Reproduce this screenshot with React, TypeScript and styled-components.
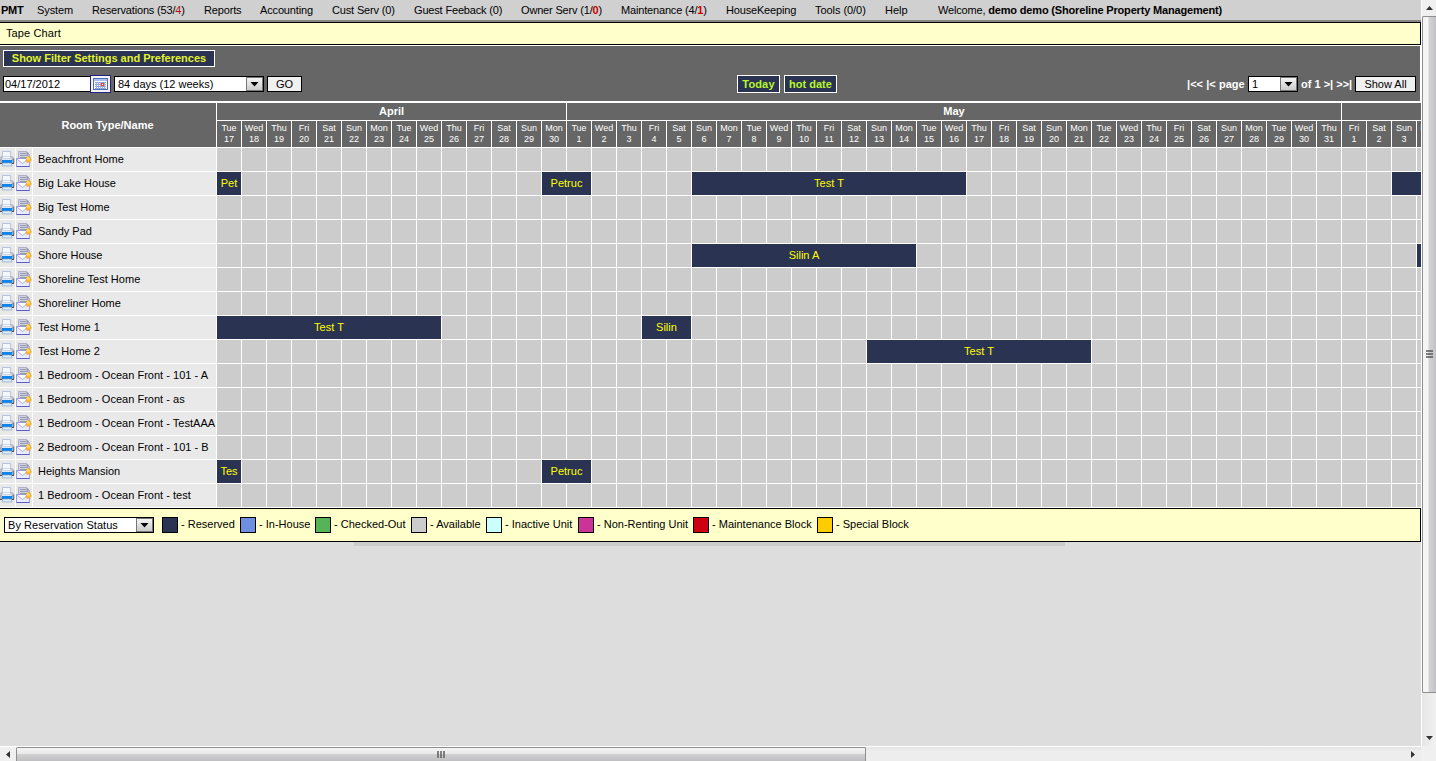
import React from "react";
import styled, { createGlobalStyle } from "styled-components";

const navy = "#2a3352";

const GlobalStyle = createGlobalStyle`
  * { box-sizing: border-box; }
  body {
    margin: 0;
    background: #ddd;
    overflow: hidden;
    font: 11px/14px "Liberation Sans", Arial, sans-serif;
    color: #000;
  }
  svg { flex: none; }
`;

const Screen = styled.div`
  display: grid;
  grid-template: 746px 15px / 1421px 15px;
  width: 1436px;
  height: 761px;
  overflow: hidden;
`;
const Page = styled.main`
  background: #ddd;
  overflow: hidden;
`;

const MenuBar = styled.nav`
  display: flex;
  height: 22px;
  padding: 3px 0 0 1px;
  background: #d0d0d0;
  border-bottom: 2px solid #888;
  white-space: nowrap;
`;
const MenuItem = styled.span<{ $w: number; $ls?: number; $bold?: boolean }>`
  width: ${(p) => p.$w}px;
  letter-spacing: ${(p) => p.$ls ?? 0}px;
  font-weight: ${(p) => (p.$bold ? "bold" : "normal")};
`;
const Alert = styled.span<{ $bold?: boolean }>`
  color: ${(p) => (p.$bold ? "#c00" : "#b01010")};
  font-weight: ${(p) => (p.$bold ? "bold" : "normal")};
`;

const TitleBar = styled.header`
  height: 23px;
  padding: 3px 5px 0 6px;
  background: #ffffcc;
  border: 1px solid #000;
  border-left: 0;
  letter-spacing: 0.1px;
`;

const Toolbar = styled.section`
  height: 58px;
  padding: 4px 4px 0 3px;
  background: #666;
  border: solid #fff;
  border-width: 1px 1px 2px 0;
`;
const Controls = styled.div`
  display: flex;
  align-items: center;
  height: 18px;
  margin-top: 8px;
`;
const NavyButton = styled.button<{ $w: number; $h: number; $color: string; $ls?: number }>`
  display: flex;
  align-items: flex-start;
  justify-content: center;
  width: ${(p) => p.$w}px;
  height: ${(p) => p.$h}px;
  padding: ${(p) => p.$h - 17}px 0 0;
  border: 1px solid #fff;
  background: ${navy};
  color: ${(p) => p.$color};
  font: bold 11px/14px "Liberation Sans", Arial, sans-serif;
  letter-spacing: ${(p) => p.$ls ?? 0}px;
  white-space: nowrap;
`;
const DateField = styled.div`
  width: 87px;
  height: 16px;
  padding-left: 1px;
  border: 1px solid #000;
  border-right: 0;
  background: #fff;
`;
const CalendarButton = styled.span`
  display: flex;
  width: 21px;
  height: 18px;
  border: 1px solid #23237d;
  background: #f4f4fc;
  margin-right: 3px;
`;
const SelectBox = styled.div<{ $w: number; $ls?: number }>`
  display: flex;
  justify-content: space-between;
  flex: none;
  width: ${(p) => p.$w}px;
  height: 16px;
  padding-left: 3px;
  border: 1px solid #000;
  background: #fff;
  color: #000;
  font-weight: normal;
  letter-spacing: ${(p) => p.$ls ?? 0}px;
`;
const Arrow = styled.span`
  display: flex;
  align-items: center;
  justify-content: center;
  width: 17px;
  height: 14px;
  border: 1px solid #777;
  background: linear-gradient(#f4f4f4, #ccc);
`;
const PlainButton = styled.button<{ $w: number; $gap?: number }>`
  flex: none;
  width: ${(p) => p.$w}px;
  height: 16px;
  margin-left: ${(p) => p.$gap ?? 4}px;
  padding: 0;
  border: 1px solid #000;
  background: #f0f0f0;
  font: 11px/14px "Liberation Sans", Arial, sans-serif;
  color: #000;
`;
const DateLinks = styled.div`
  display: flex;
  gap: 4px;
  margin-left: 435px;
`;
const Pager = styled.div`
  display: flex;
  align-items: center;
  margin-left: auto;
  color: #fff;
  font-weight: bold;
  white-space: nowrap;
`;
const PagerText = styled.span<{ $w: number; $ls?: number }>`
  width: ${(p) => p.$w}px;
  letter-spacing: ${(p) => p.$ls ?? 0}px;
`;

const Chart = styled.section`
  width: 1421px;
  overflow: hidden;
`;
const ChartHead = styled.div`
  display: grid;
  grid-template-columns: 217px 1225px;
  height: 45px;
  background: #666;
  color: #fff;
`;
const Corner = styled.div`
  display: flex;
  align-items: center;
  justify-content: center;
  padding-right: 1px;
  border: solid #fff;
  border-width: 0 1px 1px 0;
  font-weight: bold;
`;
const Months = styled.div`
  display: grid;
  grid-template-columns: 350px 775px 750px;
`;
const Month = styled.div`
  height: 18px;
  padding-top: 1px;
  border: solid #fff;
  border-width: 0 1px 1px 0;
  font-weight: bold;
  text-align: center;
`;
const Days = styled.div`
  display: flex;
`;
const Day = styled.div`
  width: 25px;
  height: 27px;
  flex: none;
  padding-top: 2px;
  border: solid #fff;
  border-width: 0 1px 1px 0;
  font-size: 9px;
  line-height: 11px;
  text-align: center;
`;
const Row = styled.div`
  display: grid;
  grid-template-columns: 16px 17px 184px repeat(49, 25px);
  height: 24px;
`;
const IconCell = styled.div`
  display: flex;
  background: #e9e9e9;
  border: solid #fff;
  border-width: 0 1px 1px 0;
  overflow: hidden;
`;
const NameCell = styled.div`
  padding: 4px 0 0 5px;
  background: #e9e9e9;
  border: solid #fff;
  border-width: 0 1px 1px 0;
  letter-spacing: 0.02px;
  white-space: nowrap;
`;
const Slot = styled.div<{ $span?: number; $booked?: boolean }>`
  grid-column: span ${(p) => p.$span ?? 1};
  padding: 4px 0 0;
  border: solid #fff;
  border-width: 0 1px 1px 0;
  background: ${(p) => (p.$booked ? navy : "#ccc")};
  color: #ff0;
  text-align: center;
  overflow: hidden;
`;

const Legend = styled.footer`
  display: flex;
  align-items: center;
  height: 34px;
  padding: 0 0 0 4px;
  background: #ffffcc;
  border: 1px solid #000;
  border-left: 0;
  white-space: nowrap;
`;
const LegendList = styled.div`
  display: flex;
  margin-left: 8px;
`;
const LegendItem = styled.div<{ $w: number }>`
  display: flex;
  gap: 3px;
  width: ${(p) => p.$w}px;
`;
const Swatch = styled.span<{ $color: string }>`
  flex: none;
  width: 16px;
  height: 16px;
  border: 1px solid #000;
  background: ${(p) => p.$color};
`;
const Shade = styled.div`
  width: 711px;
  height: 4px;
  margin-left: 354px;
  background: #ccc;
`;

const VTrack = styled.div`
  display: grid;
  grid-template-rows: 16px 677px 1fr;
  border-left: 1px solid #fff;
  background: linear-gradient(90deg, #e6e6e6, #f1f1f1);
`;
const HTrack = styled.div`
  display: grid;
  grid-template-columns: 16px 850px 1fr;
  border-top: 1px solid #fff;
  background: linear-gradient(#e4e4e4, #ededed 4px);
`;
const ScrollStart = styled.div`
  display: flex;
  align-items: center;
  justify-content: center;
  background: #f0f0f0;
`;
const ScrollRight = styled.div`
  display: flex;
  align-items: center;
  justify-content: flex-end;
  padding-right: 6px;
`;
const ScrollBottom = styled.div`
  display: flex;
  align-items: flex-end;
  justify-content: center;
  padding: 0 0 6px 1px;
`;
const VThumb = styled.div`
  display: flex;
  align-items: center;
  justify-content: center;
  border: 1px solid #8f8f8f;
  border-right: 0;
  border-radius: 2px 0 0 2px;
  background: linear-gradient(90deg, #f5f5f5 0 38%, #e8e8ea 40%, #d2d2d6 50%, #c2c2c6 100%);
`;
const HThumb = styled.div`
  display: flex;
  align-items: center;
  justify-content: center;
  border: 1px solid #8f8f8f;
  border-bottom: 0;
  border-radius: 2px 2px 0 0;
  background: linear-gradient(#f5f5f5 0, #e8e8e8 45%, #d0d0d0 50%, #bfbfc2 100%);
`;
const ScrollCorner = styled.div`
  background: #f0f0f0;
`;

const Down = () => (
  <svg width="9" height="5" viewBox="0 0 9 5">
    <path d="M0.5 0h8L4.5 4.5z" fill="#000" />
  </svg>
);

const Calendar = () => (
  <svg width="19" height="16" viewBox="0 0 19 16">
    <rect x="2.5" y="2.5" width="14" height="11" fill="#fff" stroke="#4f6cb8" />
    <rect x="3" y="3" width="13" height="2" fill="#a9bdf0" />
    <path d="M4 6.5h11M4 8.5h11M4 10.5h11M4 12.5h11" stroke="#8199d6" />
    <path d="M5.5 6v7M7.5 6v7M9.5 6v7M11.5 6v7M13.5 6v7" stroke="#9db0e0" />
    <rect x="10.500" y="7.500" width="2" height="2" fill="#fff" stroke="#f0481e" />
  </svg>
);

const Printer = () => (
  <svg width="15" height="23" viewBox="0 0 15 23">
    <path d="M0 9l2-1h9l2.500 1 1 1.500V15l-1 1H0z" fill="#a9adb4" />
    <path d="M13.500 10v6" stroke="#70757d" />
    <path d="M0 10h2M11 10h3" stroke="#d5d8dc" />
    <path d="M2.500 3.500h8v7h-8z" fill="#f5f9fd" stroke="#b5c4d8" />
    <path d="M3 8.500h7" stroke="#c3dcf4" />
    <path d="M2 10.500h9.500v1.500H2z" fill="#dfe9f4" />
    <path d="M2 12h10v3H2z" fill="#0d84f0" />
    <path d="M0 15.500h2M12 15.500h2" stroke="#4d5057" />
    <path d="M3 15h8l1 3H2z" fill="#d6ecff" stroke="#8c97a6" strokeWidth=".6" />
  </svg>
);

const Mail = () => (
  <svg width="16" height="23" viewBox="0 0 16 23">
    <path d="M2.500 3.500h8l3 3v6h-11z" fill="#d3d4e2" stroke="#a3a5bd" strokeWidth=".8" />
    <path d="M4 5.500h6M4 7.500h8M4 9.500h8" stroke="#9498b4" />
    <path d="M10.500 3.500v3h3z" fill="#8b8fb0" />
    <path d="M.5 10.500h13v8H.5z" fill="#e9ebff" stroke="#9a9dda" />
    <path d="M1 11l5.500 4.500L13 11" fill="#fff" stroke="#b0b3de" />
    <path d="M.5 18.500h13" stroke="#5b5dc4" />
    <path d="M12 7l1 1.800 2-.3-.4 2 1.400 1.500-1.700.9.1 2-1.900-.7-1.700 1.100-.2-2-1.700-1 1.500-1.300-.4-2 1.700.1z" fill="#f2a62e" />
    <circle cx="12.300" cy="11" r="1.800" fill="#ffe064" />
  </svg>
);

const Grip = ({ vertical }: { vertical?: boolean }) =>
  vertical ? (
    <svg width="8" height="9" viewBox="0 0 8 9">
      <path d="M0 1h7M0 4h7M0 7h7" stroke="#555" strokeWidth="1.400" />
    </svg>
  ) : (
    <svg width="9" height="8" viewBox="0 0 9 8">
      <path d="M1 0v7M4 0v7M7 0v7" stroke="#555" strokeWidth="1.400" />
    </svg>
  );

type Booking = { at: number; days: number; guest: string };
const rooms: { name: string; bookings?: Booking[] }[] = [
  { name: "Beachfront Home" },
  {
    name: "Big Lake House",
    bookings: [
      { at: 0, days: 1, guest: "Pet" },
      { at: 13, days: 2, guest: "Petruc" },
      { at: 19, days: 11, guest: "Test T" },
      { at: 47, days: 2, guest: "" },
    ],
  },
  { name: "Big Test Home" },
  { name: "Sandy Pad" },
  {
    name: "Shore House",
    bookings: [
      { at: 19, days: 9, guest: "Silin A" },
      { at: 48, days: 1, guest: "" },
    ],
  },
  { name: "Shoreline Test Home" },
  { name: "Shoreliner Home" },
  {
    name: "Test Home 1",
    bookings: [
      { at: 0, days: 9, guest: "Test T" },
      { at: 17, days: 2, guest: "Silin" },
    ],
  },
  { name: "Test Home 2", bookings: [{ at: 26, days: 9, guest: "Test T" }] },
  { name: "1 Bedroom - Ocean Front - 101 - A" },
  { name: "1 Bedroom - Ocean Front - as" },
  { name: "1 Bedroom - Ocean Front - TestAAA" },
  { name: "2 Bedroom - Ocean Front - 101 - B" },
  {
    name: "Heights Mansion",
    bookings: [
      { at: 0, days: 1, guest: "Tes" },
      { at: 13, days: 2, guest: "Petruc" },
    ],
  },
  { name: "1 Bedroom - Ocean Front - test" },
];

const weekdays = ["Tue", "Wed", "Thu", "Fri", "Sat", "Sun", "Mon"];
const DAY_COUNT = 49;
const days = Array.from({ length: DAY_COUNT }, (_, i) => ({
  weekday: weekdays[i % 7],
  date: i < 14 ? i + 17 : i < 45 ? i - 13 : i - 44,
}));

const slotsFor = (bookings: Booking[] = []) => {
  const out: React.ReactNode[] = [];
  for (let d = 0; d < DAY_COUNT; ) {
    const b = bookings.find((x) => x.at === d);
    out.push(
      <Slot key={d} $span={b?.days} $booked={!!b}>
        {b?.guest}
      </Slot>
    );
    d += b ? b.days : 1;
  }
  return out;
};

const legend = [
  { label: "Reserved", color: navy, w: 78 },
  { label: "In-House", color: "#6f8fe0", w: 75 },
  { label: "Checked-Out", color: "#56b356", w: 96 },
  { label: "Available", color: "#ccc", w: 75 },
  { label: "Inactive Unit", color: "#ccffff", w: 92 },
  { label: "Non-Renting Unit", color: "#cc3399", w: 115 },
  { label: "Maintenance Block", color: "#cc0010", w: 124 },
  { label: "Special Block", color: "#ffcc00", w: 100 },
];

export default function App() {
  return (
    <Screen>
      <GlobalStyle />
      <Page>
        <MenuBar>
          <MenuItem $w={36} $bold $ls={-0.3}>PMT</MenuItem>
          <MenuItem $w={55} $ls={-0.1}>System</MenuItem>
          <MenuItem $w={112} $ls={-0.17}>Reservations (53/<Alert>4</Alert>)</MenuItem>
          <MenuItem $w={56} $ls={-0.15}>Reports</MenuItem>
          <MenuItem $w={72} $ls={-0.15}>Accounting</MenuItem>
          <MenuItem $w={82} $ls={-0.15}>Cust Serv (0)</MenuItem>
          <MenuItem $w={107} $ls={-0.17}>Guest Feeback (0)</MenuItem>
          <MenuItem $w={100} $ls={-0.17}>Owner Serv (1/<Alert $bold>0</Alert>)</MenuItem>
          <MenuItem $w={105} $ls={-0.17}>Maintenance (4/<Alert $bold>1</Alert>)</MenuItem>
          <MenuItem $w={89} $ls={-0.17}>HouseKeeping</MenuItem>
          <MenuItem $w={70} $ls={-0.05}>Tools (0/0)</MenuItem>
          <MenuItem $w={53}>Help</MenuItem>
          <MenuItem $w={300} $ls={-0.17}>Welcome, <b>demo demo (Shoreline Property Management)</b></MenuItem>
        </MenuBar>
        <TitleBar>Tape Chart</TitleBar>
        <Toolbar>
          <NavyButton $w={212} $h={17} $color="#e3f22c">Show Filter Settings and Preferences</NavyButton>
          <Controls>
            <DateField>04/17/2012</DateField>
            <CalendarButton><Calendar /></CalendarButton>
            <SelectBox $w={150}>84 days (12 weeks)<Arrow><Down /></Arrow></SelectBox>
            <PlainButton $w={35} $gap={3}>GO</PlainButton>
            <DateLinks>
              <NavyButton $w={43} $h={18} $color="#b9f52c" $ls={0.15}>Today</NavyButton>
              <NavyButton $w={53} $h={18} $color="#b9f52c">hot date</NavyButton>
            </DateLinks>
            <Pager>
              <PagerText $w={61} $ls={0.05}>|&lt;&lt; |&lt; page</PagerText>
              <SelectBox $w={50}>1<Arrow><Down /></Arrow></SelectBox>
              <PagerText $w={53}>&nbsp;of 1 &gt;| &gt;&gt;|</PagerText>
              <PlainButton $w={61}>Show All</PlainButton>
            </Pager>
          </Controls>
        </Toolbar>
        <Chart>
          <ChartHead>
            <Corner>Room Type/Name</Corner>
            <div>
              <Months>
                <Month>April</Month>
                <Month>May</Month>
                <Month />
              </Months>
              <Days>
                {days.map((d, i) => (
                  <Day key={i}>{d.weekday}<br />{d.date}</Day>
                ))}
              </Days>
            </div>
          </ChartHead>
          {rooms.map((r) => (
            <Row key={r.name}>
              <IconCell><Printer /></IconCell>
              <IconCell><Mail /></IconCell>
              <NameCell>{r.name}</NameCell>
              {slotsFor(r.bookings)}
            </Row>
          ))}
        </Chart>
        <Legend>
          <SelectBox $w={150} $ls={0.05}>By Reservation Status<Arrow><Down /></Arrow></SelectBox>
          <LegendList>
            {legend.map((l) => (
              <LegendItem key={l.label} $w={l.w}>
                <Swatch $color={l.color} />- {l.label}
              </LegendItem>
            ))}
          </LegendList>
        </Legend>
        <Shade />
      </Page>
      <VTrack>
        <ScrollStart>
          <svg width="7" height="4" viewBox="0 0 7 4"><path d="M0 4L3.500 0 7 4z" fill="#333" /></svg>
        </ScrollStart>
        <VThumb><Grip vertical /></VThumb>
        <ScrollBottom>
          <svg width="7" height="4" viewBox="0 0 7 4"><path d="M0 0h7L3.500 4z" fill="#333" /></svg>
        </ScrollBottom>
      </VTrack>
      <HTrack>
        <ScrollStart>
          <svg width="4" height="7" viewBox="0 0 4 7"><path d="M4 0v7L0 3.500z" fill="#333" /></svg>
        </ScrollStart>
        <HThumb><Grip /></HThumb>
        <ScrollRight>
          <svg width="4" height="7" viewBox="0 0 4 7"><path d="M0 0v7l4-3.500z" fill="#333" /></svg>
        </ScrollRight>
      </HTrack>
      <ScrollCorner />
    </Screen>
  );
}
